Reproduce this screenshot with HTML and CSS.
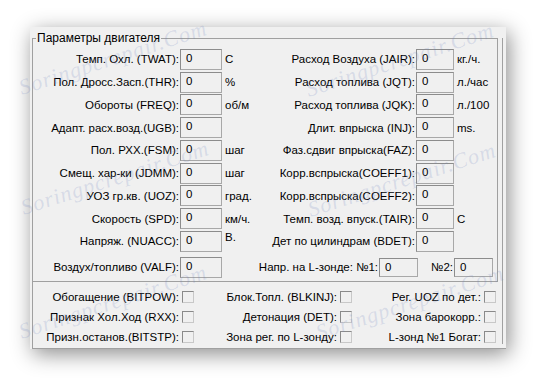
FILE: index.html
```html
<!DOCTYPE html>
<html lang="ru">

<head>
    <meta charset="UTF-8">
    <title>Параметры двигателя</title>
    <link rel="stylesheet" href="styles.css">
</head>

<body>
    <div class="window">
        <div class="frame">
            <div class="main">
                <fieldset class="engine">
                    <legend>Параметры двигателя</legend>
                    <div class="params">
                        <span class="label">Темп. Охл. (TWAT):</span><span class="box">0</span><span class="unit">С</span>
                        <span class="label">Расход Воздуха (JAIR):</span><span class="box">0</span><span class="unit">кг./ч.</span>

                        <span class="label">Пол. Дросс.Засп.(THR):</span><span class="box">0</span><span class="unit">%</span>
                        <span class="label">Расход топлива (JQT):</span><span class="box">0</span><span class="unit">л./час</span>

                        <span class="label">Обороты (FREQ):</span><span class="box">0</span><span class="unit">об/м</span>
                        <span class="label">Расход топлива (JQK):</span><span class="box">0</span><span class="unit">л./100</span>

                        <span class="label">Адапт. расх.возд.(UGB):</span><span class="box">0</span><span class="unit"></span>
                        <span class="label">Длит. впрыска (INJ):</span><span class="box">0</span><span class="unit">ms.</span>

                        <span class="label">Пол. РХХ.(FSM):</span><span class="box">0</span><span class="unit">шаг</span>
                        <span class="label">Фаз.сдвиг впрыска(FAZ):</span><span class="box">0</span><span class="unit"></span>

                        <span class="label">Смещ. хар-ки (JDMM):</span><span class="box">0</span><span class="unit">шаг</span>
                        <span class="label">Корр.вспрыска(COEFF1):</span><span class="box">0</span><span class="unit"></span>

                        <span class="label">УОЗ гр.кв. (UOZ):</span><span class="box">0</span><span class="unit">град.</span>
                        <span class="label">Корр.вспрыска(COEFF2):</span><span class="box">0</span><span class="unit"></span>

                        <span class="label">Скорость (SPD):</span><span class="box">0</span><span class="unit">км/ч.</span>
                        <span class="label">Темп. возд. впуск.(TAIR):</span><span class="box">0</span><span class="unit">С</span>

                        <span class="label">Напряж. (NUACC):</span><span class="box">0</span><span class="unit high">В.</span>
                        <span class="label">Дет по цилиндрам (BDET):</span><span class="box">0</span><span class="unit"></span>

                        <span class="label last">Воздух/топливо (VALF):</span><span class="box last">0</span>
                        <div class="lambda">
                            <span>Напр. на L-зонде: №1:</span><span class="box">0</span>
                            <span class="second">№2:</span><span class="box">0</span>
                        </div>
                    </div>
                </fieldset>

                <div class="flags">
                    <span class="label">Обогащение (BITPOW):</span><span class="check"></span>
                    <span class="label">Блок.Топл. (BLKINJ):</span><span class="check"></span>
                    <span class="label">Рег. UOZ по дет.:</span><span class="check"></span>

                    <span class="label">Признак Хол.Ход (RXX):</span><span class="check"></span>
                    <span class="label">Детонация (DET):</span><span class="check"></span>
                    <span class="label">Зона барокорр.:</span><span class="check"></span>

                    <span class="label">Призн.останов.(BITSTP):</span><span class="check"></span>
                    <span class="label">Зона рег. по L-зонду:</span><span class="check"></span>
                    <span class="label">L-зонд №1 Богат:</span><span class="check"></span>
                </div>
            </div>
            <div class="edge"></div>
        </div>
    </div>

    <!-- watermark of the source site -->
    <span class="mark" style="left: 113px; top: 58px">Soringpcrepair.Com</span>
    <span class="mark" style="left: 115px; top: 178px">Soringpcrepair.Com</span>
    <span class="mark" style="left: 113px; top: 302px">Soringpcrepair.Com</span>
    <span class="mark" style="left: 400px; top: 60px">Soringpcrepair.Com</span>
    <span class="mark" style="left: 402px; top: 180px">Soringpcrepair.Com</span>
    <span class="mark" style="left: 410px; top: 303px">Soringpcrepair.Com</span>
</body>

</html>
```

FILE: styles.css
```css
body {
    margin: 0;
    background: #fff;
    font-family: "Liberation Sans", Arial, sans-serif;
    font-size: 11.5px;
    color: #000;
    width: 537px;
    height: 384px;
    overflow: hidden;
    position: relative;
}

.window {
    margin: 27px 0 0 30px;
    width: 476px;
    height: 322px;
    box-sizing: border-box;
    padding: 4px 0 0 2px;
    background: #f0f0f0;
    box-shadow: 3px 5px 20px rgba(0, 0, 0, 0.45);
}

.frame {
    display: flex;
    height: 318px;
    box-sizing: border-box;
    border-bottom: 1px solid #a0a0a0;
}

.main {
    width: 466px;
    display: flex;
    flex-direction: column;
}

.edge {
    flex: 1;
    border-left: 1px solid #a0a0a0;
    margin: 7px 0 4px 4px;
}

.engine {
    margin: 0;
    padding: 0 0 2px 0;
    height: 251px;
    box-sizing: border-box;
    border: 1px solid #a0a0a0;
}

.engine legend {
    margin-left: 3px;
    padding: 0 1px;
    font-size: 12px;
    line-height: 14px;
}

.params {
    display: grid;
    grid-template-columns: 147px 42px 50px 144px 38px 1fr;
    grid-auto-rows: 22.75px;
    padding-top: 3px;
}

.label {
    display: flex;
    justify-content: flex-end;
    align-items: center;
    white-space: nowrap;
    padding-right: 1px;
}

.box {
    align-self: center;
    height: 21px;
    box-sizing: border-box;
    border: 1px solid #a8a8a8;
    border-top-color: #8c8c8c;
    border-left-color: #8c8c8c;
    padding: 1px 0 0 5px;
    line-height: 15px;
}

.unit {
    display: flex;
    align-items: center;
    padding-left: 3px;
    white-space: nowrap;
}

.unit.high {
    align-items: flex-start;
    padding-top: 1px;
}

.last {
    margin-top: 6px;
}

.lambda {
    grid-column: 3 / -1;
    margin-top: 6px;
    display: flex;
    justify-content: flex-end;
    align-items: center;
    white-space: nowrap;
    padding-right: 4px;
}

.lambda .box {
    width: 39px;
    height: 19px;
    margin-left: 1px;
}

.lambda .second {
    margin-left: 13px;
}

.flags {
    flex: 1;
    border-left: 1px solid #a0a0a0;
    display: grid;
    grid-template-columns: 147px 14px 144px 14px 130px 14px;
    grid-auto-rows: 20px;
    padding-top: 5px;
}

.check {
    align-self: center;
    margin-left: 2px;
    width: 12px;
    height: 12px;
    box-sizing: border-box;
    border: 1px solid #c8c8c8;
    border-top-color: #8a8a8a;
    border-left-color: #8a8a8a;
}

.mark {
    position: absolute;
    transform: translate(-50%, -50%) rotate(-18deg);
    font-family: "Liberation Serif", serif;
    font-style: italic;
    font-size: 22px;
    letter-spacing: 1px;
    white-space: nowrap;
    color: rgba(110, 130, 190, 0.2);
    pointer-events: none;
}
```
